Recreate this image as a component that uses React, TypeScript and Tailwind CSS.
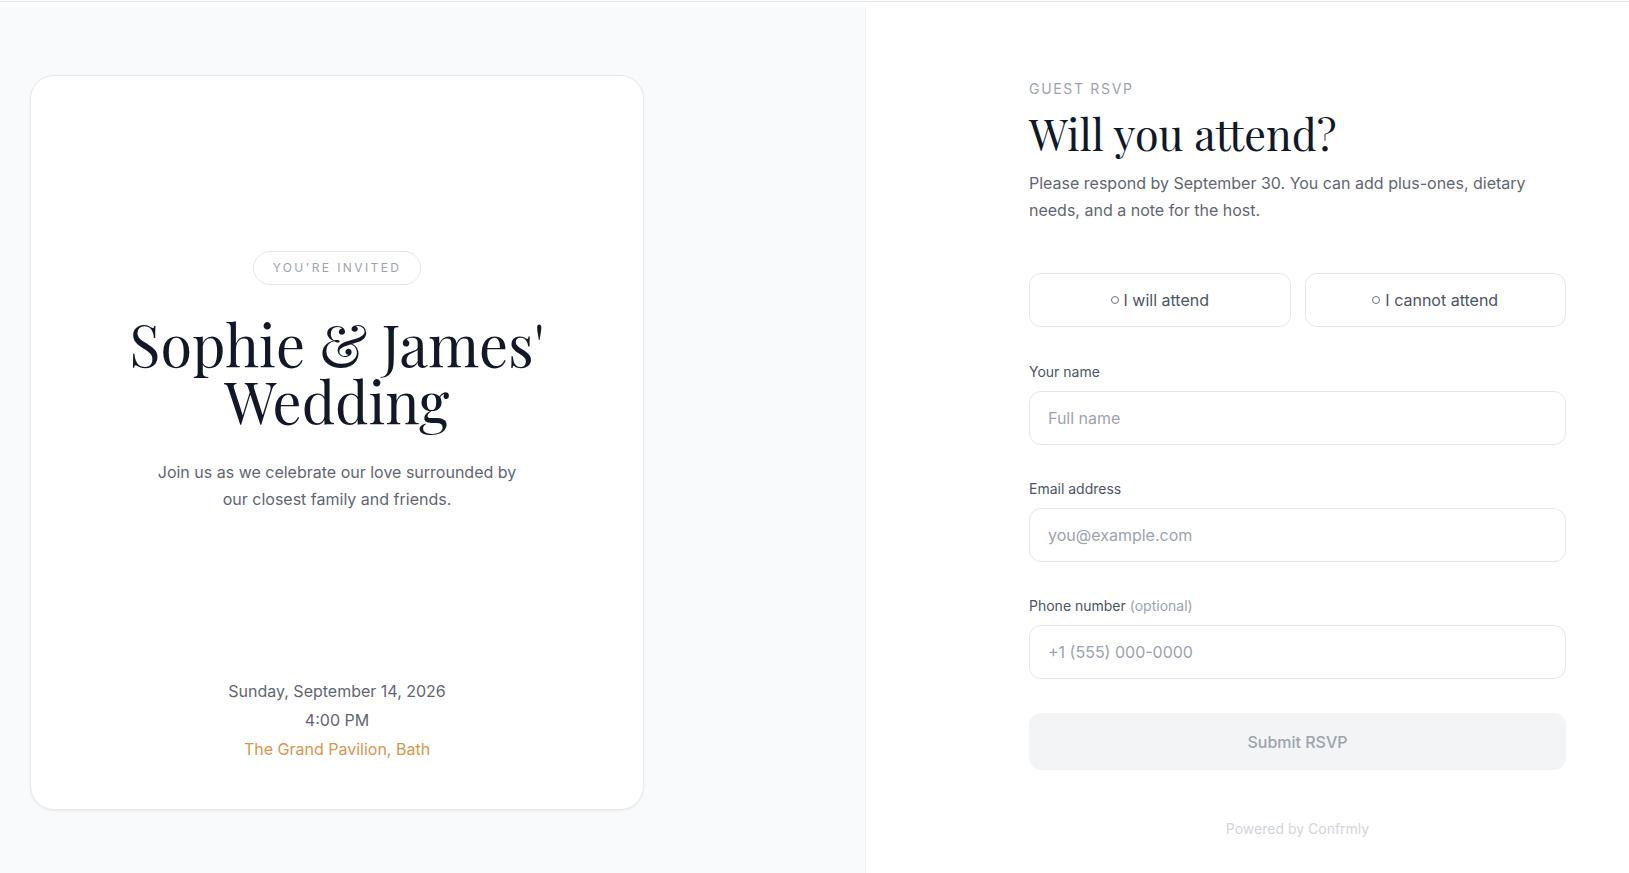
import React from "react";

const sans = "font-['Inter','Liberation_Sans',sans-serif]";
const serif = "font-['Playfair_Display','Liberation_Serif',serif]";

function Choice({ label }: { label: string }) {
  return (
    <button
      type="button"
      className="flex h-[54px] flex-1 items-center justify-center gap-[5px] rounded-xl border border-[#e5e7eb] bg-white text-[16px] text-[#4b5563]"
    >
      <span className="inline-block h-[8px] w-[8px] rounded-full border border-[#6b7280]" />
      <span>{label}</span>
    </button>
  );
}

function Field({
  label,
  hint,
  placeholder,
  type = "text",
  className = "",
}: {
  label: string;
  hint?: string;
  placeholder: string;
  type?: string;
  className?: string;
}) {
  return (
    <label className={`block ${className}`}>
      <span className="block text-[14px] leading-5 text-[#4b5563]">
        {label}
        {hint && <span className="text-[#9ca3af]"> {hint}</span>}
      </span>
      <input
        type={type}
        placeholder={placeholder}
        className="mt-[9px] block h-[54px] w-full rounded-xl border border-[#e5e7eb] bg-white px-[18px] text-[16px] text-[#111827] outline-none placeholder:text-[#9ca3af]"
      />
    </label>
  );
}

export default function App() {
  return (
    <div className={`flex h-[873px] w-full flex-col overflow-hidden bg-white ${sans}`}>
      {/* hairline at the very top of the page */}
      <div className="h-[7px] shrink-0">
        <div className="mt-px h-px bg-[#e3e4e6]" />
      </div>

      <div className="flex flex-1">
        {/* invitation side */}
        <section className="w-[866px] shrink-0 border-r border-[#f0f1f3] bg-[#f9fafb] pl-[30px] pt-[68px]">
          <div className="flex h-[735px] w-[614px] flex-col items-center rounded-[24px] border border-[#e8e9eb] bg-white pb-[45px] pt-[175px] text-center shadow-[0_1px_3px_rgba(0,0,0,0.06)]">
            <span className="rounded-full border border-[#e5e7eb] px-[19px] py-[8px] text-[12px] leading-4 tracking-[0.2em] text-[#9ca3af]">
              YOU'RE INVITED
            </span>
            <h1 className={`mt-[30px] text-[57.5px] leading-[57px] text-[#111827] ${serif}`}>
              Sophie &amp; James'
              <br />
              Wedding
            </h1>
            <p className="mt-[30px] max-w-[370px] text-[16px] leading-[27px] text-[#5f6673]">
              Join us as we celebrate our love surrounded by our closest family and friends.
            </p>
            <div className="flex-1" />
            <div className="text-[16px] leading-[29px] text-[#5f6673]">
              <div>Sunday, September 14, 2026</div>
              <div>4:00 PM</div>
              <div className="text-[#d6964c]">The Grand Pavilion, Bath</div>
            </div>
          </div>
        </section>

        {/* RSVP form side */}
        <section className="flex-1 pl-[163px] pt-[72px]">
          <div className="w-[537px]">
            <div className="text-[14px] leading-5 tracking-[0.12em] text-[#9ca3af]">GUEST RSVP</div>
            <h2 className={`mt-[5px] text-[43px] leading-[58px] text-[#111827] ${serif}`}>
              Will you attend?
            </h2>
            <p className="mt-[8px] max-w-[500px] text-[16px] leading-[27px] text-[#5f6673]">
              Please respond by September 30. You can add plus-ones, dietary needs, and a note for the host.
            </p>

            <div className="mt-[49px] flex gap-[14px]">
              <Choice label="I will attend" />
              <Choice label="I cannot attend" />
            </div>

            <Field className="mt-[35px]" label="Your name" placeholder="Full name" />
            <Field className="mt-[34px]" label="Email address" placeholder="you@example.com" type="email" />
            <Field
              className="mt-[34px]"
              label="Phone number"
              hint="(optional)"
              placeholder="+1 (555) 000-0000"
              type="tel"
            />

            <button
              type="button"
              className="mt-[34px] h-[57px] w-full rounded-xl bg-[#f3f4f6] text-[16px] font-medium text-[#9ca3af]"
            >
              Submit RSVP
            </button>

            <div className="mt-[49px] text-center text-[14px] leading-5 text-[#d1d5db]">
              Powered by Confrmly
            </div>
          </div>
        </section>
      </div>
    </div>
  );
}
